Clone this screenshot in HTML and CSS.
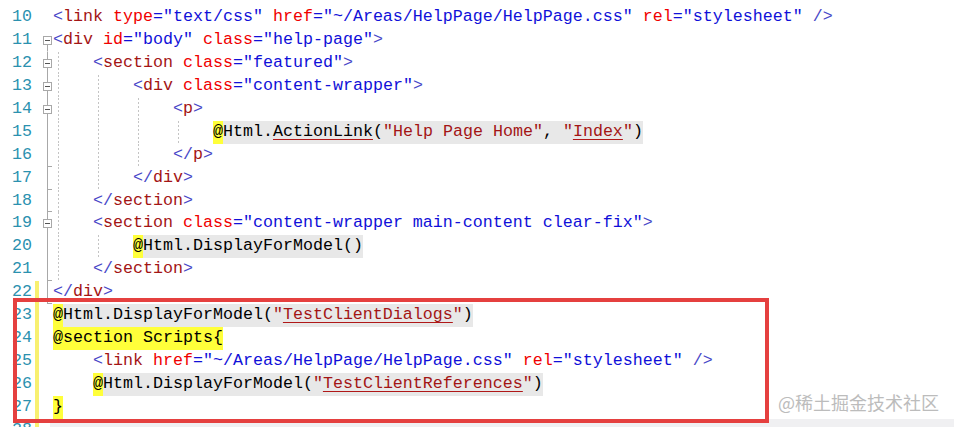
FILE: index.html
```html
<!DOCTYPE html>
<html lang="en">
<head>
    <meta charset="UTF-8">
    <title>HelpPage.cshtml</title>
    <link rel="stylesheet" href="styles.css">
</head>
<body>
    <div class="editor">
        <div class="ln"><span class="num">10</span><span class="chg"></span><span class="fold"></span><span class="code"><span class="tg">&lt;</span><span class="el">link</span> <span class="at">type</span><span class="av">="text/css"</span> <span class="at">href</span><span class="av">="~/Areas/HelpPage/HelpPage.css"</span> <span class="at">rel</span><span class="av">="stylesheet"</span> <span class="tg">/&gt;</span></span></div>
        <div class="ln"><span class="num">11</span><span class="chg"></span><span class="fold box first"></span><span class="code"><span class="tg">&lt;</span><span class="el">div</span> <span class="at">id</span><span class="av">="body"</span> <span class="at">class</span><span class="av">="help-page"</span><span class="tg">&gt;</span></span></div>
        <div class="ln"><span class="num">12</span><span class="chg"></span><span class="fold box"></span><span class="code"><span class="ind"></span><span class="tg">&lt;</span><span class="el">section</span> <span class="at">class</span><span class="av">="featured"</span><span class="tg">&gt;</span></span></div>
        <div class="ln"><span class="num">13</span><span class="chg"></span><span class="fold box"></span><span class="code"><span class="ind"></span><span class="ind"></span><span class="tg">&lt;</span><span class="el">div</span> <span class="at">class</span><span class="av">="content-wrapper"</span><span class="tg">&gt;</span></span></div>
        <div class="ln"><span class="num">14</span><span class="chg"></span><span class="fold box"></span><span class="code"><span class="ind"></span><span class="ind"></span><span class="ind"></span><span class="tg">&lt;</span><span class="el">p</span><span class="tg">&gt;</span></span></div>
        <div class="ln"><span class="num">15</span><span class="chg"></span><span class="fold line"></span><span class="code"><span class="ind"></span><span class="ind"></span><span class="ind"></span><span class="ind"></span><span class="rz">@</span><span class="cs">Html.<span class="sq">ActionLink</span>(<span class="st">"Help Page Home"</span>, <span class="st">"<span class="sq">Index</span>"</span>)</span></span></div>
        <div class="ln"><span class="num">16</span><span class="chg"></span><span class="fold end"></span><span class="code"><span class="ind"></span><span class="ind"></span><span class="ind"></span><span class="tg">&lt;/</span><span class="el">p</span><span class="tg">&gt;</span></span></div>
        <div class="ln"><span class="num">17</span><span class="chg"></span><span class="fold end"></span><span class="code"><span class="ind"></span><span class="ind"></span><span class="tg">&lt;/</span><span class="el">div</span><span class="tg">&gt;</span></span></div>
        <div class="ln"><span class="num">18</span><span class="chg"></span><span class="fold end"></span><span class="code"><span class="ind"></span><span class="tg">&lt;/</span><span class="el">section</span><span class="tg">&gt;</span></span></div>
        <div class="ln"><span class="num">19</span><span class="chg"></span><span class="fold box"></span><span class="code"><span class="ind"></span><span class="tg">&lt;</span><span class="el">section</span> <span class="at">class</span><span class="av">="content-wrapper main-content clear-fix"</span><span class="tg">&gt;</span></span></div>
        <div class="ln"><span class="num">20</span><span class="chg"></span><span class="fold line"></span><span class="code"><span class="ind"></span><span class="ind"></span><span class="rz">@</span><span class="cs">Html.DisplayForModel()</span></span></div>
        <div class="ln"><span class="num">21</span><span class="chg"></span><span class="fold end"></span><span class="code"><span class="ind"></span><span class="tg">&lt;/</span><span class="el">section</span><span class="tg">&gt;</span></span></div>
        <div class="ln"><span class="num">22</span><span class="chg on"></span><span class="fold end"></span><span class="code"><span class="tg">&lt;/</span><span class="el">div</span><span class="tg">&gt;</span></span></div>
        <div class="ln"><span class="num">23</span><span class="chg on"></span><span class="fold"></span><span class="code"><span class="rz">@</span><span class="cs">Html.DisplayForModel(<span class="st">"<span class="sq">TestClientDialogs</span>"</span>)</span></span></div>
        <div class="ln"><span class="num">24</span><span class="chg on"></span><span class="fold"></span><span class="code"><span class="rz">@section Scripts{</span></span></div>
        <div class="ln"><span class="num">25</span><span class="chg on"></span><span class="fold"></span><span class="code"><span class="sp"></span><span class="tg">&lt;</span><span class="el">link</span> <span class="at">href</span><span class="av">="~/Areas/HelpPage/HelpPage.css"</span> <span class="at">rel</span><span class="av">="stylesheet"</span> <span class="tg">/&gt;</span></span></div>
        <div class="ln"><span class="num">26</span><span class="chg on"></span><span class="fold"></span><span class="code"><span class="sp"></span><span class="rz">@</span><span class="cs">Html.DisplayForModel(<span class="st">"<span class="sq">TestClientReferences</span>"</span>)</span></span></div>
        <div class="ln"><span class="num">27</span><span class="chg on"></span><span class="fold"></span><span class="code"><span class="rz">}</span></span></div>
        <div class="ln"><span class="num">28</span><span class="chg on"></span><span class="fold"></span><span class="code shade"></span></div>

        <div class="mark"></div>
        <div class="watermark">@稀土掘金技术社区</div>
    </div>
</body>
</html>
```

FILE: styles.css
```css
body {
    margin: 0;
    background-color: white;
    overflow: hidden;
}

.editor {
    position: relative;
    width: 954px;
    height: 427px;
    padding-top: 6px;
    box-sizing: border-box;
    font-family: 'Liberation Mono', 'DejaVu Sans Mono', monospace;
    font-size: 16.67px;
    color: #000;
}

.ln {
    display: flex;
    height: 22.94px;
    line-height: 22.94px;
    white-space: pre;
}

.num {
    width: 34px;
    padding-right: 2px;
    box-sizing: border-box;
    text-align: right;
    color: #2b91af;
    flex-shrink: 0;
}

.chg {
    width: 6px;
    flex-shrink: 0;
}

.chg.on {
    background: linear-gradient(#f8f070, #f8f070) 1px 0 / 4px 100% no-repeat;
}

/* outlining margin */
.fold {
    width: 13px;
    flex-shrink: 0;
    display: flex;
    align-items: center;
}

.fold.line,
.fold.box {
    background: linear-gradient(#a8a8a8, #a8a8a8) 7px 0 / 1px 100% no-repeat;
}

.fold.box.first {
    background: linear-gradient(#a8a8a8, #a8a8a8) 7px 100% / 1px 50% no-repeat;
}

.fold.end {
    background:
        linear-gradient(#a8a8a8, #a8a8a8) 7px 0 / 1px 100% no-repeat,
        linear-gradient(#a8a8a8, #a8a8a8) 7px 100% / 5px 1px no-repeat;
}

.fold.box::before {
    content: "";
    width: 9px;
    height: 9px;
    margin-left: 3px;
    box-sizing: border-box;
    border: 1px solid #a8a8a8;
    background: white linear-gradient(#555, #555) center / 5px 1px no-repeat;
}

.code {
    flex: 1;
    display: block;
    height: 22.94px;
}

.code.shade {
    background-color: #f0f0f2;
    margin-left: -3px;
}

.ind,
.sp {
    display: inline-block;
    width: 40px;
    height: 22.94px;
    vertical-align: top;
}

.ind {
    background-image: repeating-linear-gradient(to bottom, #c4c4c4 0 2px, transparent 2px 4px);
    background-size: 1px 100%;
    background-position: 5px 0;
    background-repeat: no-repeat;
}

/* syntax colours */
.tg {
    color: #4848c8;
}

.el {
    color: #a31515;
}

.at {
    color: #f00000;
}

.av {
    color: #1010d8;
}

.st {
    color: #a31515;
}

.rz,
.cs {
    display: inline-block;
    height: 22.94px;
    vertical-align: top;
}

.rz {
    background-color: #ffff3a;
}

.cs {
    background-color: #e8e8e8;
}

.sq {
    text-decoration: underline;
    text-decoration-color: #b01818;
    text-underline-offset: 3px;
}

/* annotation box */
.mark {
    position: absolute;
    left: 13px;
    top: 298px;
    width: 756px;
    height: 125px;
    box-sizing: border-box;
    border: 4px solid #e5403f;
}

.watermark {
    position: absolute;
    left: 778px;
    top: 390px;
    font-family: 'Noto Sans CJK SC', sans-serif;
    font-size: 18px;
    line-height: 24px;
    color: #bcbcbc;
}
```
